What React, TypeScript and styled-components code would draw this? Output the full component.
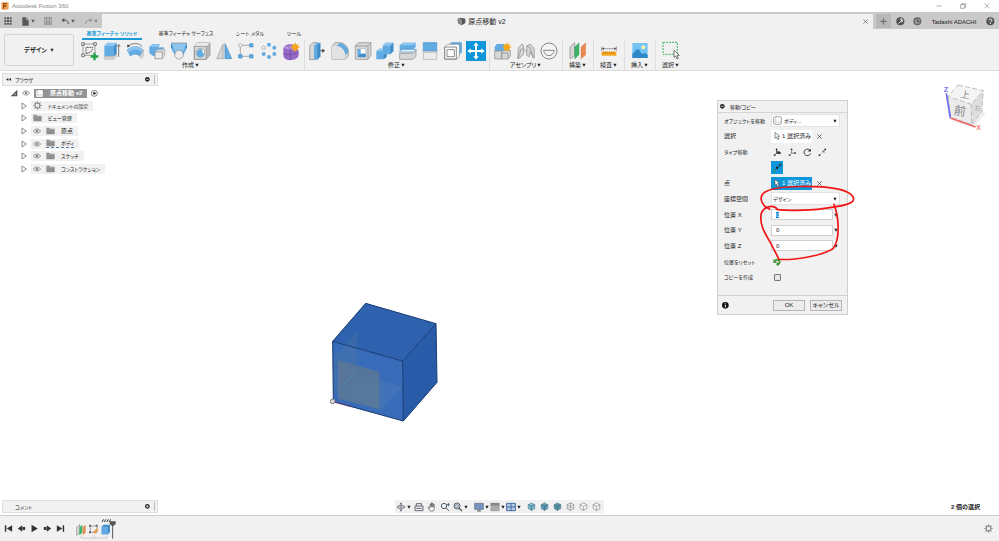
import React, { useEffect, useRef } from "react";
import styled, { createGlobalStyle, css } from "styled-components";

const GlobalStyle = createGlobalStyle`
  * { box-sizing: border-box; }
  html, body { margin: 0; padding: 0; }
  body, button, input, select {
    font-family: "Liberation Sans", "Noto Sans CJK JP", sans-serif;
    font-size: 6px;
    line-height: 8px;
    font-feature-settings: "palt";
    color: #222;
  }
  button, input, select { margin: 0; padding: 0; border: 0; background: none; border-radius: 0; }
  svg { display: block; flex: none; }
  ul { list-style: none; margin: 0; padding: 0; }
`;

/* ---------- layout ---------- */

const Page = styled.div`
  display: flex;
  flex-direction: column;
  min-height: 100vh;
  background: #fff;
  white-space: nowrap;
  overflow: hidden;
`;

const TitleBar = styled.header`
  display: flex;
  align-items: center;
  height: 12px;
  padding: 0 7px 0 1px;
  gap: 3px;
  color: #888;
`;

const WindowButtons = styled.div`
  display: flex;
  gap: 14px;
  margin-left: auto;
`;

const PlainButton = styled.button`
  display: flex;
  align-items: center;
  justify-content: center;
  gap: 1px;
`;

const TabStrip = styled.div`
  display: flex;
  height: 17px;
  padding-top: 2px;
  background: #c9c9c9;
`;

const QuickAccess = styled.nav`
  display: flex;
  align-items: center;
  gap: 9px;
  width: 102px;
  padding-left: 4px;
  border-bottom: 1px solid #f1f1f1;
`;

const DocumentTab = styled.div`
  flex: 1;
  display: flex;
  align-items: center;
  justify-content: center;
  gap: 2px;
  padding: 0 5px 0 0;
  background: #f1f1f1;
  font-size: 7px;
`;

const TabTitle = styled.span`
  display: flex;
  align-items: center;
  justify-content: center;
  gap: 2px;
  flex: 1;
`;

const NewTab = styled.button`
  display: flex;
  align-items: center;
  justify-content: center;
  width: 15px;
  height: 14px;
  margin-left: 3px;
  background: #b8b8b8;
`;

const Account = styled.div`
  display: flex;
  align-items: center;
  gap: 8px;
  width: 103px;
  margin-left: 5px;
  padding-right: 4px;
`;

const UserButton = styled(PlainButton)`
  margin: 0 auto;
`;

const Ribbon = styled.section`
  display: flex;
  height: 42px;
  background: #f1f1f1;
  border-bottom: 1px solid #dcdcdc;
`;

const WorkspaceButton = styled.button`
  width: 70px;
  height: 32px;
  margin: 5px 4px 0;
  display: flex;
  align-items: center;
  justify-content: center;
  gap: 3px;
  border: 1px solid #d4d4d4;
  border-radius: 2px;
  font-weight: bold;
`;

const RibbonMain = styled.div`
  flex: 1;
`;

const RibbonTabs = styled.div`
  display: flex;
  height: 11px;
  padding-left: 4px;
`;

const RibbonTab = styled.button<{ $active?: boolean; $width: number }>`
  width: ${(p) => p.$width}px;
  height: 11px;
  padding-bottom: 1px;
  border-bottom: 2px solid ${(p) => (p.$active ? "#1a9bd7" : "transparent")};
  color: ${(p) => (p.$active ? "#1a9bd7" : "#222")};
  font-size: 5px;
  font-weight: ${(p) => (p.$active ? "bold" : "normal")};
`;

const Groups = styled.div`
  display: flex;
`;

const Group = styled.div<{ $width: number; $last?: boolean }>`
  width: ${(p) => p.$width}px;
  height: 30px;
  padding: 0 2px 0 1px;
  border-right: 1px solid ${(p) => (p.$last ? "transparent" : "#dedede")};
`;

const GroupTools = styled.div`
  display: grid;
  grid-auto-flow: column;
  grid-auto-columns: 1fr;
  justify-items: center;
  height: 21px;
  align-items: center;
`;

const Tool = styled.button<{ $active?: boolean }>`
  display: flex;
  width: 20px;
  height: 20px;
  background: ${(p) => (p.$active ? "#0d96d9" : "none")};
`;

const GroupLabel = styled(PlainButton)`
  margin: 0 auto;
`;

const Canvas = styled.main`
  position: relative;
  flex: 1;
  display: flex;
  flex-direction: column;
  padding: 2px;
`;

const PanelBar = styled.div`
  display: flex;
  align-items: center;
  gap: 4px;
  width: 156px;
  height: 13px;
  padding: 0 1px 0 3px;
  background: #f1f1f1;
  border: 1px solid #dedede;
`;

const PanelText = styled.span`
  flex: 1;
  font-size: 5px;
`;

const CommentText = styled(PanelText)`
  padding-left: 9px;
`;

const Grip = styled.i`
  width: 2px;
  height: 9px;
  border-left: 1px solid #bbb;
`;

const Tree = styled.ul`
  display: grid;
  grid-auto-rows: 1fr;
  height: 88px;
  margin-top: 1px;
  padding-left: 18px;
`;

const TreeRow = styled.li`
  display: flex;
  align-items: center;
  gap: 3px;
`;

const RootRow = styled(TreeRow)`
  gap: 4px;
  margin-left: -10px;
`;

const NodeBox = styled.div`
  display: flex;
  align-items: center;
  gap: 5px;
  height: 10px;
  padding: 0 5px 0 2px;
  background: #f1f1f1;
`;

const NodeIcon = styled.span`
  display: flex;
  width: 8px;
  justify-content: center;
`;

const NodeName = styled.span<{ $dotted?: boolean; $dense?: boolean }>`
  display: flex;
  align-items: center;
  gap: 6px;
  height: 9px;
  font-size: ${(p) => (p.$dense ? 5 : 6)}px;
  ${(p) =>
    p.$dotted &&
    css`
      border-bottom: 1px dashed #5b78a8;
    `}
`;

const RootName = styled.span`
  display: flex;
  align-items: center;
  gap: 6px;
  height: 9px;
  padding: 0 5px 0 1px;
  background: #949494;
  color: #fff;
  font-weight: bold;
`;

const BottomRow = styled.div`
  display: grid;
  grid-template-columns: 1fr auto 1fr;
  align-items: center;
  margin-top: auto;
  padding-right: 17px;
`;

const ViewBar = styled.nav`
  display: flex;
  align-items: center;
  gap: 3px;
  height: 13px;
  padding: 0 3px 0 1px;
  margin-left: 17px;
  background: #f1f1f1;
`;

const ViewCluster = styled.div<{ $gap: number }>`
  display: flex;
  gap: ${(p) => p.$gap}px;
  margin-left: 3px;
`;

const Status = styled.output`
  justify-self: end;
  font-weight: bold;
`;

const Timeline = styled.footer`
  display: flex;
  align-items: center;
  height: 26px;
  padding: 0 6px 0 3px;
  background: #f1f1f1;
  border-top: 1px solid #ccc;
`;

const Playback = styled.div`
  display: flex;
  gap: 2px;
  margin-right: 9px;
`;

const TimelineEnd = styled.div`
  margin-left: auto;
`;

/* ---------- floating items on the canvas ---------- */

const BodyModel = styled.svg`
  position: absolute;
  left: 320px;
  top: 219px;
`;

const ViewCube = styled.svg`
  position: absolute;
  right: 0;
  top: 4px;
`;

const RedMark = styled.svg`
  position: absolute;
  right: 134px;
  top: 19px;
  pointer-events: none;
`;

const Dialog = styled.form`
  position: absolute;
  right: 151px;
  top: 29px;
  width: 131px;
  background: #f1f1f1;
  border: 1px solid #cfcfcf;
`;

const DialogHeader = styled.div`
  display: flex;
  align-items: center;
  gap: 5px;
  height: 12px;
  padding-left: 2px;
  border-bottom: 1px solid #d6d6d6;
  font-size: 5px;
`;

const Fields = styled.div`
  display: grid;
  grid-auto-rows: 1fr;
  height: 172px;
  margin: 0 7px 10px 6px;
`;

const Field = styled.div<{ $dense?: boolean }>`
  display: grid;
  grid-template-columns: 47px 1fr;
  align-items: center;
  font-size: ${(p) => (p.$dense ? 5 : 6)}px;
`;

const Control = styled.div<{ $gap?: number }>`
  display: flex;
  align-items: center;
  gap: ${(p) => p.$gap ?? 0}px;
`;

const SelectBox = styled.div`
  display: flex;
  align-items: center;
  flex: 1;
  gap: 2px;
  height: 13px;
  padding: 0 2px 0 1px;
  background: #fff;
  border: 1px solid #e2e2e2;
`;

const Select = styled.select`
  appearance: none;
  flex: 1;
  min-width: 0;
  outline: none;
  font-size: 5px;
`;

const PickButton = styled.button<{ $active?: boolean }>`
  display: flex;
  align-items: center;
  gap: 1px;
  width: 41px;
  height: 13px;
  padding-left: 2px;
  margin-right: 5px;
  background: ${(p) => (p.$active ? "#0d96d9" : "#fff")};
  color: ${(p) => (p.$active ? "#fff" : "#222")};
`;

const ModeButton = styled.button<{ $active?: boolean }>`
  display: flex;
  align-items: center;
  justify-content: center;
  width: 12px;
  height: 13px;
  background: ${(p) => (p.$active ? "#0d96d9" : "none")};
`;

const NumberInput = styled.input`
  width: 62px;
  height: 11px;
  padding: 0 4px;
  background: #fff;
  border: 1px solid #d0d0d0;
  outline: none;
  &::selection { background: #0078d7; color: #fff; }
`;

const CheckBox = styled.input`
  appearance: none;
  width: 7px;
  height: 7px;
  margin-left: 3px;
  border: 1px solid #777;
  border-radius: 1px;
  background: #e6e6e6;
`;

const ResetButton = styled.button`
  margin-left: 2px;
`;

const DialogFooter = styled.div`
  display: flex;
  align-items: center;
  gap: 5px;
  height: 19px;
  padding: 0 5px 0 4px;
  border-top: 1px solid #d0d0d0;
`;

const FooterButton = styled.button`
  width: 32px;
  height: 11px;
  border: 1px solid #b5b5b5;
  background: #ececec;
  line-height: 9px;
  &:first-of-type { margin-left: auto; }
`;

/* ---------- icons ---------- */

type IconProps = { children: React.ReactNode; size?: number; box?: number };
const Icon = ({ children, size = 20, box = 60 }: IconProps) => (
  <svg width={size} height={size} viewBox={`0 0 ${box} ${box}`} fill="none" aria-hidden="true">
    {children}
  </svg>
);

const Caret = ({ color = "#222" }: { color?: string }) => (
  <svg width="4" height="4" viewBox="0 0 12 12" aria-hidden="true">
    <path d="M1 2h10L6 11z" fill={color} />
  </svg>
);

const B = "#62ace3";
const BL = "#8cc6ef";
const BD = "#3f8cc8";
const G = "#d6d6d6";
const GL = "#ececec";
const GD = "#8a8a8a";

const createTools: [string, React.ReactNode][] = [
  ["スケッチを作成", <>
    <path d="M9 9h36v34H9z" stroke="#777" strokeWidth="2" />
    <path d="M5 5h8v8H5zM41 5h8v8h-8zM5 39h8v8H5z" fill="#f1f1f1" stroke="#444" strokeWidth="2" />
    <path d="M18 37V19h20c0 9-6 18-20 18z" stroke="#555" strokeWidth="3" strokeDasharray="5 2" />
    <path d="M40 35h7v8h8v7h-8v8h-7v-8h-8v-7h8z" fill="#21a249" />
  </>],
  ["押し出し", <>
    <path d="m7 14 8-9h29l-8 9z" fill={BL} /><path d="M7 14h29v33H7z" fill={B} />
    <path d="m36 14 8-9v33l-8 9z" fill={BD} /><path d="M7 46h29l8-9v9l-8 9H7z" fill={G} stroke={GD} />
    <path d="M50 48V12m-4 5 4-7 4 7" stroke="#444" strokeWidth="2" />
  </>],
  ["回転", <>
    <path d="M6 27c14-14 36-14 49 0L45 46c-9-8-20-8-29 0z" fill={B} stroke={BD} />
    <path d="M6 27c14-14 36-14 49 0l-5 7c-12-11-27-11-39 0z" fill={BL} />
    <path d="m44 46 11-19v18l-5 8z" fill={G} stroke={GD} /><path d="M8 17C20 5 42 4 52 17" stroke="#444" strokeWidth="2" />
    <path d="m6 19 2-9 7 6z" fill="#333" />
  </>],
  ["スイープ", <>
    <path d="M7 17 17 9h22l-5 10h16v15L40 44H16L7 36z" fill={B} />
    <path d="m7 17 10-8h22l-7 9z" fill={BL} /><path d="m24 33 8-8h22v18l-8 10H24z" fill={G} stroke={GD} />
    <path d="M24 33h22v20H24z" fill={GL} stroke={GD} strokeWidth="2" />
  </>],
  ["ロフト", <>
    <path d="M6 6h48v15L43 42H17L6 21z" fill={B} /><path d="M6 6h48v14H6z" fill={BD} />
    <path d="M6 6h48L42 30H18z" fill={BL} /><path d="M6 6h48" stroke={GD} strokeWidth="2" />
    <circle cx="30" cy="41" r="13" fill={GL} stroke={GD} strokeWidth="2" />
  </>],
  ["穴", <>
    <path d="M7 16 17 5h37v37L43 55H7z" fill="#b8b8b8" stroke={GD} strokeWidth="2" />
    <path d="M7 16 17 5h37L43 16z" fill={GL} /><path d="M7 16h36v39H7z" fill={G} stroke={GD} strokeWidth="2" />
    <circle cx="25" cy="35" r="13" fill="#fff" stroke={GD} strokeWidth="2" /><path d="M14 37a11 11 0 0 1 17-11 12 12 0 0 0 5 13 11 11 0 0 1-22-2z" fill={B} />
  </>],
  ["ミラー", <>
    <path d="M27 10v43H8z" fill={G} stroke="#999" strokeWidth="2" /><path d="M33 8v45h20z" fill={B} stroke={BD} strokeWidth="2" />
    <path d="M30 4v53" stroke="#aaa" />
  </>],
  ["矩形状パターン", <>
    <path d="M18 13h24M13 19v22M18 46h24" stroke={GD} strokeWidth="2" /><circle cx="13" cy="13" r="5" fill="#fff" stroke={GD} strokeWidth="2" />
    <path d="M41 8h10v10H41zM8 41h10v10H8zM41 41h10v10H41z" fill={B} stroke={BD} strokeWidth="2" />
  </>],
  ["円形状パターン", <>
    <circle cx="14" cy="20" r="5" fill="#fff" stroke={GD} strokeWidth="2" />
    <g fill={B}><circle cx="30" cy="11" r="6" /><circle cx="46" cy="20" r="6" /><circle cx="46" cy="39" r="6" /><circle cx="30" cy="48" r="6" /><circle cx="14" cy="39" r="6" /></g>
  </>],
  ["フォームを作成", <>
    <path d="M7 23c0-8 14-15 24-13l14 7 8 12v14c-2 14-28 18-38 12-5-3-8-8-8-13z" fill="#9468c4" />
    <path d="M9 20c8-8 22-8 32-1l-13 7C19 24 13 24 9 20z" fill="#b795de" />
    <path d="M28 26v31M8 38c7 4 30 4 44-3M18 13c6 4 11 8 10 13" stroke="#6d459e" strokeWidth="2" />
    <path d="m43 4 3 7 7-3-3 7 8 3-8 4 3 7-7-3-3 8-4-8-7 3 3-7-7-4 7-3-3-7 7 3z" fill="#f5a61d" />
  </>],
];

const modifyTools: [string, React.ReactNode][] = [
  ["プレス/プル", <>
    <path d="M8 14 17 5h14v42l-8 9H8z" fill={G} stroke={GD} strokeWidth="2" />
    <path d="m21 14 9-9h10v41l-9 10H21z" fill={B} /><path d="m31 14 9-9v41l-9 10z" fill={BD} /><path d="M38 29h13" stroke="#333" strokeWidth="2" /><path d="m46 23 8 6-8 6z" fill="#333" />
  </>],
  ["フィレット", <>
    <path d="M6 15 15 5h17c12 2 21 11 23 24v17L45 55H6z" fill={G} stroke={GD} strokeWidth="2" />
    <path d="M27 8c8-4 25 7 28 25l-9 8c-1-13-11-24-25-25z" fill={B} stroke={BD} />
    <path d="M6 16h15c14 1 24 12 24 26v13H6z" fill="#e2e2e2" />
  </>],
  ["シェル", <>
    <path d="M7 15 16 5h38v38L45 55H7z" fill={G} stroke={GD} strokeWidth="2" />
    <path d="M7 15h38v40M45 15l9-10" stroke={GD} strokeWidth="2" /><path d="M14 23h24v25H14z" fill="#fff" stroke={GD} />
    <path d="M14 24h9v14h14v10H14z" fill={B} /><path d="m14 48 9-10h15v10z" fill={BD} />
  </>],
  ["結合", <>
    <path d="m23 14 9-9h23v26l-9 9H35v7l-9 8H4V31l9-8h10z" fill={B} />
    <path d="m23 14 9-9h23l-9 9zM4 31l9-8h10v8z" fill={BL} /><path d="m46 14 9-9v26l-9 9zM26 40h9v7l-9 8z" fill={BD} />
  </>],
  ["面をオフセット", <>
    <path d="m5 13 10-8h38v13l-8 9H5z" fill={B} /><path d="m5 13 10-8h38l-8 8z" fill={BL} />
    <path d="m5 31 8-6h42l-8 8H5z" fill="#e8f4fc" stroke={BD} strokeWidth="2" />
    <path d="M5 37h40l9-9v18l-9 9H5z" fill={G} stroke={GD} strokeWidth="2" />
  </>],
  ["面を分割", <>
    <path d="M10 5h40v23H10z" fill={B} stroke={BD} strokeWidth="2" /><path d="M10 34h40v21H10z" fill={GL} stroke="#aaa" strokeWidth="2" />
    <path d="M6 30h48" stroke={BD} strokeWidth="2" />
  </>],
  ["オフセット", <>
    <path d="m15 15 11-10h29v29L44 44H15z" fill={B} stroke={BD} strokeWidth="2" />
    <path d="m5 18 8-8h36v36l-8 9H5z" fill="#fff" stroke={GD} strokeWidth="2" /><path d="M5 18h35v36H5zM12 26h22v21H12z" stroke={GD} strokeWidth="3" />
  </>],
];

const moveIcon = (
  <path d="m30 4 8 10h-5v13h13v-5l10 8-10 8v-5H33v13h5l-8 10-8-10h5V33H14v5L4 30l10-8v5h13V14h-5z" fill="#fff" />
);

const assemblyTools: [string, React.ReactNode][] = [
  ["新規コンポーネント", <>
    <path d="m5 17 7-8h22v22H5z" fill={B} /><path d="M5 30h21v24H5zM26 36l7-8h19v17l-7 9H26z" fill={G} stroke={GD} strokeWidth="2" />
    <path d="M26 36h19v18" stroke={GD} strokeWidth="2" /><path d="m42 4 3 7 7-3-3 7 7 3-7 4 3 7-7-3-3 7-4-7-7 3 3-7-7-4 7-3-3-7 7 3z" fill="#f5a61d" />
  </>],
  ["ジョイント", <>
    <path d="m7 20 12-11 4 6v24L9 53H5z" fill={G} stroke={GD} strokeWidth="2" /><path d="m54 20-12-11-10 6v28l8 4 3-15 9 19h3z" fill={G} stroke={GD} strokeWidth="2" />
    <path d="m7 52 7-26 9-4M33 15l9 5 10 30M23 27l11 4" stroke={GD} strokeWidth="2" />
  </>],
  ["位置合わせジョイント", <>
    <circle cx="30" cy="30" r="24" fill="#f4f4f4" stroke="#888" strokeWidth="3" /><path d="M14 28h32c-1 9-8 16-16 16s-15-7-16-16z" stroke="#888" strokeWidth="3" />
  </>],
];

const planesArt = (
  <>
    <path d="M6 18 20 5v39L6 54z" fill={G} stroke={GD} strokeWidth="2" /><path d="M20 18 33 5v36L20 54z" fill="#3cb465" stroke="#32935a" />
    <path d="M39 18 53 5v36L39 54z" fill="#e98a52" stroke="#d37743" />
  </>
);

const singles: [string, string, React.ReactNode][] = [
  ["構築", "オフセット平面", planesArt],
  ["検査", "計測", <>
    <path d="M8 16v14M52 16v14M8 23h44" stroke="#777" strokeWidth="2" /><path d="m8 23 7-4v8zM52 23l-7-4v8z" fill="#555" />
    <path d="M8 32h44v12H8z" fill="#f5a31a" /><path d="M13 32v5m6-5v5m6-5v5m6-5v5m6-5v5m6-5v5" stroke="#b87300" strokeWidth="2" />
  </>],
  ["挿入", "イメージを挿入", <>
    <path d="M7 6h46v45H7z" fill="#74c3f5" /><path d="M7 37c9-3 10-15 17-12 7 1 8 15 14 14 7-5 9-3 15 3v9H7z" fill="#3189c7" />
    <circle cx="40" cy="19" r="6" fill="#fff3b0" />
  </>],
  ["選択", "選択ツール", <>
    <path d="M6 4h43v36H6z" stroke="#3bb263" strokeWidth="3" strokeDasharray="6 3" />
    <path d="M39 28v21l5-4 4 9 4-2-4-9h7z" fill="#fff" stroke="#333" strokeWidth="2" />
  </>],
];

const Eye = () => (
  <svg width="8" height="6" viewBox="0 0 24 18" fill="none" aria-hidden="true">
    <path d="M1 9C7 1 17 1 23 9 17 17 7 17 1 9z" stroke="#999" strokeWidth="3" /><circle cx="12" cy="9" r="4" fill="#888" />
  </svg>
);
const Folder = () => (
  <svg width="9" height="8" viewBox="0 0 27 24" aria-hidden="true">
    <path d="M1 2h9l3 3h13v17H1z" fill="#8f8f8f" /><path d="M2 8h23" stroke="#ccc" />
  </svg>
);
const Gear = ({ size = 9 }: { size?: number }) => (
  <Icon size={size} box={30}>
    <circle cx="15" cy="15" r="8" stroke="#8d8d8d" strokeWidth="4" />
    <path d="M15 1v5M15 24v5M1 15h5M24 15h5M5 5l4 4M21 21l4 4M5 25l4-4M21 9l4-4" stroke="#8d8d8d" strokeWidth="4" />
  </Icon>
);
const Expander = () => (
  <Icon size={8} box={24}><path d="M6 3v18l13-9z" stroke="#555" strokeWidth="2" fill="#fff" /></Icon>
);
const BoxIcon = ({ size = 9 }: { size?: number }) => (
  <Icon size={size} box={27}>
    <rect x="2" y="2" width="23" height="23" rx="4" fill="#fff" stroke="#777" strokeWidth="2" /><path d="M8 3v15l-5 5M8 18h16" stroke="#bbb" strokeWidth="2" />
  </Icon>
);
const Dot = ({ minus }: { minus?: boolean }) => (
  <Icon size={5} box={15}>
    <circle cx="7" cy="7" r="7" fill="#222" /><path d={minus ? "M3 7h8" : "M3 7h8M7 3v8"} stroke="#fff" strokeWidth="2" />
  </Icon>
);
const Cross = ({ size = 5, color = "#333" }: { size?: number; color?: string }) => (
  <Icon size={size} box={15}><path d="M1 1l13 13M14 1 1 14" stroke={color} strokeWidth="2" /></Icon>
);
const Cursor = () => (
  <Icon size={8} box={24}><path d="M6 1v18l4-4 4 8 4-2-4-8h6z" fill="#fff" stroke="#555" strokeWidth="2" /></Icon>
);

const nodes: { name: string; kind: "gear" | "folder"; eye?: boolean; dotted?: boolean; dense?: boolean }[] = [
  { name: "ドキュメントの設定", kind: "gear", dense: true },
  { name: "ビュー管理", kind: "folder", dense: true },
  { name: "原点", kind: "folder", eye: true },
  { name: "ボディ", kind: "folder", eye: true, dotted: true, dense: true },
  { name: "スケッチ", kind: "folder", eye: true, dense: true },
  { name: "コンストラクション", kind: "folder", eye: true, dense: true },
];

const moveModes: [string, React.ReactNode][] = [
  ["自由移動", <><path d="M12 2v15h14M12 17 4 25" stroke="#333" strokeWidth="3" /><path d="m8 7 4-6 4 6zM21 13l7 4-7 4zM2 20l2 7 6-2zM14 11h8v8h-8z" fill="#333" /></>],
  ["移動", <><path d="M12 2v15h14M12 17 4 25" stroke="#444" strokeWidth="2" /><path d="m8 7 4-6 4 6zM21 13l7 4-7 4zM2 20l2 7 6-2z" fill="#333" /></>],
  ["回転", <><path d="M24 9a11 11 0 1 0 1 9" stroke="#333" strokeWidth="3" /><path d="M26 2v10H16z" fill="#333" /></>],
  ["点から点", <><path d="m6 23 18-18" stroke="#555" strokeWidth="2" strokeDasharray="5 3" /><circle cx="5" cy="24" r="3" fill="#333" /><circle cx="24" cy="5" r="3" fill="#333" /><path d="M14 10h6v6" stroke="#333" strokeWidth="2" /></>],
];

const viewTools: [string, boolean, React.ReactNode][] = [
  ["オービット", true, <><path d="M15 3v24M3 15h24" stroke="#667" strokeWidth="2" /><ellipse cx="15" cy="15" rx="12" ry="5" stroke="#667" strokeWidth="2" /><path d="m11 7 4-6 4 6zM11 23l4 6 4-6z" fill="#667" /></>],
  ["ビュー正面", false, <><path d="M3 12h24v14H3zM7 12V5h16v7M7 19h16" stroke="#667" strokeWidth="3" /></>],
  ["画面移動", false, <path d="M9 27 3 16l3-1 3 4V7h3v8V3h3v12V4h3v12l1-9h3v13l-3 7z" fill="#fff" stroke="#555" strokeWidth="2" />],
  ["ズーム", false, <><circle cx="12" cy="12" r="8" stroke="#567" strokeWidth="3" /><path d="m18 18 9 9M25 3v10M20 8h9" stroke="#567" strokeWidth="3" /></>],
  ["フィット", true, <><circle cx="12" cy="12" r="9" fill="#ddd" stroke="#567" strokeWidth="3" /><path d="m18 18 9 9" stroke="#555" strokeWidth="4" /><path d="M8 8h8v8H8z" stroke="#789" strokeWidth="2" /></>],
];
const displayTools: [string, React.ReactNode][] = [
  ["表示設定", <><path d="M2 4h26v18H2z" fill="#7795bf" stroke="#56657a" strokeWidth="2" /><path d="M9 27h12M15 22v5" stroke="#666" strokeWidth="3" /></>],
  ["グリッド", <><path d="M2 3h26v24H2z" fill="#aaa" stroke="#999" /><path d="M2 3h26v8H2z" fill="#888" /></>],
  ["ビューポート", <><path d="M2 4h26v22H2z" fill="#b6cdea" stroke="#426a9f" strokeWidth="3" /><path d="M15 4v22M2 15h26" stroke="#426a9f" strokeWidth="3" /></>],
];
const cubeTones = ["#7fb9d1", "#5f9db8", "#5b96ad", "", "", ""];

const playPaths: [string, string][] = [
  ["先頭へ", "M5 6h4v18H5zM25 6v18L10 15z"],
  ["前へ", "M5 15 17 6v18zM18 11h7v8h-7z"],
  ["再生", "M7 5v20l17-10z"],
  ["次へ", "M25 15 13 6v18zM5 11h7v8H5z"],
  ["末尾へ", "M21 6h4v18h-4zM5 6v18l15-9z"],
];

/* ---------- components ---------- */

const MoveDialog = () => {
  const xRef = useRef<HTMLInputElement>(null);
  useEffect(() => {
    xRef.current?.focus();
    xRef.current?.select();
  }, []);
  return (
    <Dialog aria-label="移動/コピー" onSubmit={(e) => e.preventDefault()}>
      <DialogHeader><Dot minus />移動/コピー</DialogHeader>
      <Fields>
        <Field $dense>
          <label htmlFor="object">オブジェクトを移動</label>
          <SelectBox><BoxIcon /><Select id="object"><option>ボディ...</option></Select><Caret /></SelectBox>
        </Field>
        <Field>
          <span>選択</span>
          <Control><PickButton type="button"><Cursor />1 選択済み</PickButton><PlainButton type="button" aria-label="選択をクリア"><Cross /></PlainButton></Control>
        </Field>
        <Field $dense>
          <span>タイプ移動</span>
          <Control $gap={3}>
            {moveModes.map(([label, art]) => (
              <ModeButton type="button" key={label} aria-label={label}><Icon size={9} box={30}>{art}</Icon></ModeButton>
            ))}
          </Control>
        </Field>
        <Field>
          <span />
          <ModeButton type="button" $active aria-label="点から位置" aria-pressed="true">
            <Icon size={9} box={30}><path d="M8 22 24 6" stroke="#222" strokeWidth="3" strokeDasharray="5 2" /><circle cx="24" cy="6" r="4" stroke="#222" strokeWidth="2" /><circle cx="14" cy="16" r="4" fill="#222" /><path d="M3 21v6h7" stroke="#2fa84f" strokeWidth="3" /></Icon>
          </ModeButton>
        </Field>
        <Field>
          <span>点</span>
          <Control><PickButton type="button" $active><Cursor />1 選択済み</PickButton><PlainButton type="button" aria-label="点をクリア"><Cross /></PlainButton></Control>
        </Field>
        <Field>
          <label htmlFor="space">座標空間</label>
          <SelectBox><Select id="space"><option>デザイン</option></Select><Caret /></SelectBox>
        </Field>
        {["X", "Y", "Z"].map((axis) => (
          <Field key={axis}>
            <label htmlFor={`pos${axis}`}>位置 {axis}</label>
            <Control $gap={1}><NumberInput id={`pos${axis}`} ref={axis === "X" ? xRef : undefined} defaultValue="0" /><Caret /></Control>
          </Field>
        ))}
        <Field $dense>
          <span>位置をリセット</span>
          <ResetButton type="button" aria-label="位置をリセット">
            <Icon size={8} box={24}><path d="M5 10c5-8 15-5 15 2 0 5-5 8-9 5" stroke="#4a9b3d" strokeWidth="6" /><path d="M1 3v12h12z" fill="#4a9b3d" /><path d="M13 11v12h4z" fill="#2f7528" /></Icon>
          </ResetButton>
        </Field>
        <Field $dense>
          <label htmlFor="copy">コピーを作成</label>
          <CheckBox id="copy" type="checkbox" />
        </Field>
      </Fields>
      <DialogFooter>
        <Icon size={7} box={21}><circle cx="10" cy="10" r="10" fill="#111" /><path d="M10 4v3M10 9v7" stroke="#fff" strokeWidth="3" /></Icon>
        <FooterButton type="submit">OK</FooterButton>
        <FooterButton type="button">キャンセル</FooterButton>
      </DialogFooter>
    </Dialog>
  );
};

const ToolGroup = ({ label, width, tools, children, last }: { label: string; width: number; tools: [string, React.ReactNode][]; children?: React.ReactNode; last?: boolean }) => (
  <Group $width={width} $last={last}>
    <GroupTools>
      {tools.map(([name, art]) => (
        <Tool key={name} aria-label={name}><Icon>{art}</Icon></Tool>
      ))}
      {children}
    </GroupTools>
    <GroupLabel>{label}<Caret /></GroupLabel>
  </Group>
);

export default function App() {
  return (
    <Page>
      <GlobalStyle />
      <TitleBar>
        <Icon size={8} box={24}><rect x="1" y="1" width="22" height="22" rx="3" fill="#f2a65b" /><path d="M8 20V5h10M8 12h8" stroke="#9c4a0b" strokeWidth="4" /></Icon>
        <span>Autodesk Fusion 360</span>
        <WindowButtons>
          <PlainButton aria-label="最小化"><Icon size={10} box={30}><path d="M7 15h16" stroke="#888" strokeWidth="2" /></Icon></PlainButton>
          <PlainButton aria-label="元のサイズ"><Icon size={10} box={30}><path d="M8 11h12v11H8zM11 11V8h12v11h-3" stroke="#888" strokeWidth="2" /></Icon></PlainButton>
          <PlainButton aria-label="閉じる"><Icon size={10} box={30}><path d="m7 7 15 15M22 7 7 22" stroke="#888" strokeWidth="2" /></Icon></PlainButton>
        </WindowButtons>
      </TitleBar>

      <TabStrip>
        <QuickAccess>
          <PlainButton aria-label="データパネル"><Icon size={8} box={24}><path d="M1 1h6v6H1zM9 1h6v6H9zM17 1h6v6h-6zM1 9h6v6H1zM9 9h6v6H9zM17 9h6v6h-6zM1 17h6v6H1zM9 17h6v6H9zM17 17h6v6h-6z" fill="#555" /></Icon></PlainButton>
          <PlainButton aria-label="ファイル"><Icon size={9} box={27}><path d="M4 1h12l7 8v17H4z" fill="#555" /><path d="M16 1v8h7" stroke="#ccc" strokeWidth="2" /></Icon><Caret color="#555" /></PlainButton>
          <PlainButton aria-label="保存"><Icon size={8} box={24}><path d="M2 2h20v20H2zM7 2v7h10V2M6 22v-8h12v8M6 18h12" stroke="#777" strokeWidth="2" /></Icon></PlainButton>
          <PlainButton aria-label="元に戻す"><Icon size={9} box={27}><path d="M6 9c9 0 16 2 16 12" stroke="#555" strokeWidth="3" /><path d="M1 10 10 3v13z" fill="#555" /></Icon><Caret color="#555" /></PlainButton>
          <PlainButton aria-label="やり直し"><Icon size={9} box={27}><path d="M21 9C12 9 5 11 5 21" stroke="#999" strokeWidth="3" /><path d="m26 10-9-7v13z" fill="#999" /></Icon><Caret color="#888" /></PlainButton>
        </QuickAccess>
        <DocumentTab>
          <TabTitle>
            <Icon size={9} box={27}><path d="m2 5 11-3 12 3v13l-11 7L3 19z" fill="#555" /><path d="M2 5h13v19L3 19z" fill="#888" /></Icon>
            原点移動 v2
          </TabTitle>
          <PlainButton aria-label="タブを閉じる"><Cross color="#555" /></PlainButton>
        </DocumentTab>
        <NewTab aria-label="新規タブ"><Icon size={7} box={21}><path d="M10 1v19M1 10h19" stroke="#666" strokeWidth="3" /></Icon></NewTab>
        <Account>
          <PlainButton aria-label="拡張機能"><Icon size={9} box={27}><circle cx="13" cy="13" r="12" fill="#505050" /><path d="m7 20 10-10M12 9c2-5 7-4 8-2l-4 1 1 4 4-1c0 3-4 5-7 2" stroke="#ddd" strokeWidth="3" /></Icon></PlainButton>
          <PlainButton aria-label="ジョブの状態"><Icon size={9} box={27}><circle cx="13" cy="13" r="10" fill="#999" stroke="#666" strokeWidth="4" /><path d="M13 7v7h6" stroke="#444" strokeWidth="3" /></Icon></PlainButton>
          <UserButton>Tadashi ADACHI</UserButton>
          <PlainButton aria-label="ヘルプ"><Icon size={9} box={27}><circle cx="13" cy="13" r="12" fill="#505050" /><path d="M9 10c0-6 9-5 9 0 0 3-5 3-5 6M13 18v3" stroke="#fff" strokeWidth="3" /></Icon></PlainButton>
        </Account>
      </TabStrip>

      <Ribbon>
        <WorkspaceButton>デザイン<Caret /></WorkspaceButton>
        <RibbonMain>
          <RibbonTabs>
            <RibbonTab $active $width={60}>基準フィーチャ ソリッド</RibbonTab>
            <RibbonTab $width={88}>基準フィーチャ サーフェス</RibbonTab>
            <RibbonTab $width={40}>シート メタル</RibbonTab>
            <RibbonTab $width={48}>ツール</RibbonTab>
          </RibbonTabs>
          <Groups>
            <ToolGroup label="作成" width={227} tools={createTools} />
            <ToolGroup label="修正" width={185} tools={modifyTools}>
              <Tool $active aria-label="移動/コピー"><Icon>{moveIcon}</Icon></Tool>
            </ToolGroup>
            <ToolGroup label="アセンブリ" width={73} tools={assemblyTools} />
            {singles.map(([label, name, art], i) => (
              <ToolGroup key={label} label={label} width={31} tools={[[name, art]]} last={i === 3} />
            ))}
          </Groups>
        </RibbonMain>
      </Ribbon>

      <Canvas>
        <PanelBar>
          <Icon size={5} box={15}><path d="M7 3v9L0 7zM15 3v9L8 7z" fill="#333" /></Icon>
          <PanelText>ブラウザ</PanelText>
          <PlainButton aria-label="ブラウザを折りたたむ"><Dot minus /></PlainButton>
          <Grip />
        </PanelBar>
        <Tree>
          <RootRow>
            <Icon size={8} box={24}><path d="M22 2v20H2z" fill="#555" /><path d="M18 12v6h-7z" fill="#aaa" /></Icon>
            <Eye />
            <RootName><BoxIcon />原点移動 v2</RootName>
            <Icon size={7} box={21}><circle cx="10" cy="10" r="9" fill="#fff" stroke="#444" strokeWidth="2" /><circle cx="10" cy="10" r="4" fill="#333" /></Icon>
          </RootRow>
          {nodes.map((n) => (
            <TreeRow key={n.name}>
              <Expander />
              <NodeBox>
                {n.eye && <NodeIcon><Eye /></NodeIcon>}
                <NodeName $dotted={n.dotted} $dense={n.dense}>{n.kind === "gear" ? <Gear /> : <Folder />}{n.name}</NodeName>
              </NodeBox>
            </TreeRow>
          ))}
        </Tree>

        <BodyModel width="130" height="140" viewBox="0 0 390 420" fill="none">
          <path d="M137 40 348 101 248 213 38 154z" fill="#2e62ae" />
          <path d="m38 154 210 59 2 180L40 335z" fill="#386bb8" />
          <path d="m248 213 100-112 3 176-101 116z" fill="#285ca8" />
          <path d="m38 210 72-86v116l-70 78z" fill="#5179a0" opacity=".35" />
          <path d="m54 316 66-62 128 36-64 70z" fill="#5a86b5" opacity=".3" />
          <path d="m54 210 124 36v112L54 326z" fill="#5c7893" opacity=".8" />
          <path d="m54 302 60-62" stroke="#4e8fae" strokeWidth="5" opacity=".4" />
          <path d="M137 40 348 101 248 213 38 154zM38 154l2 181 210 58-2-180M250 393l101-116-3-176" stroke="#163a72" strokeWidth="3" strokeLinejoin="round" />
          <path d="m42 336 50 14" stroke="#7d3a68" strokeWidth="2" />
          <circle cx="38" cy="334" r="7" fill="#ddd" stroke="#777" strokeWidth="3" />
        </BodyModel>

        <ViewCube width="69" height="60" viewBox="0 0 207 180" fill="none">
          <path d="m65 138 67 18 34-38-8-14-42 22z" fill="#ddd" opacity=".5" />
          <path d="M84 30 160 47 124 88 54 65z" fill="#f4f4f4" /><path d="m54 65 70 23 1 61-62-22z" fill="#ebebeb" /><path d="m124 88 36-41-5 63-30 39z" fill="#dedede" />
          <path d="M84 30 160 47 124 88 54 65zM54 65l9 62 62 22-1-61M125 149l30-39 5-63" stroke="#bdbdbd" strokeWidth="3" strokeDasharray="15 7" />
          <path d="m49 55 12 74" stroke="#6b6bf0" strokeWidth="5" /><path d="m61 129 76 27" stroke="#f06464" strokeWidth="4" />
          <text x="70" y="117" fontSize="36" fill="#888" transform="rotate(11 70 117)">前</text>
          <text x="90" y="67" fontSize="28" fill="#888" transform="rotate(10 90 67)">上</text>
          <text x="134" y="106" fontSize="17" fill="#aaa">右</text>
          <text x="41" y="50" fontSize="22" fontWeight="bold" fill="#7474f0">Z</text>
          <text x="139" y="166" fontSize="21" fontWeight="bold" fill="#f57d7d">X</text>
        </ViewCube>

        <MoveDialog />

        <RedMark width="160" height="180" viewBox="0 0 480 540" fill="none" stroke="#f01414" strokeWidth="5" strokeLinecap="round" strokeLinejoin="round">
          <path d="M194 358C163 343 160 314 186 303 221 286 340 286 392 296 434 303 455 322 442 335 427 348 386 351 338 358 295 361 254 364 218 359" />
          <path d="M218 359C205 341 173 350 168 374 164 408 181 431 199 463L222 508C263 511 350 499 385 475 406 446 402 381 387 343" />
        </RedMark>

        <BottomRow>
          <PanelBar>
            <CommentText>コメント</CommentText>
            <PlainButton aria-label="コメントを追加"><Dot /></PlainButton>
            <Grip />
          </PanelBar>
          <ViewBar>
            {viewTools.map(([label, menu, art]) => (
              <PlainButton key={label} aria-label={label}><Icon size={10} box={30}>{art}</Icon>{menu && <Caret />}</PlainButton>
            ))}
            <ViewCluster $gap={1}>
              {displayTools.map(([label, art]) => (
                <PlainButton key={label} aria-label={label}><Icon size={10} box={30}>{art}</Icon><Caret /></PlainButton>
              ))}
            </ViewCluster>
            <ViewCluster $gap={4}>
              {cubeTones.map((tone, i) => (
                <PlainButton key={i} aria-label={`表示スタイル ${i + 1}`}>
                  <Icon size={9} box={30}>
                    <path d="m15 3 11 6v13l-11 6-11-6V9z" fill={tone || "#f6f6f6"} stroke={tone ? "#4c7c91" : "#777"} strokeWidth="2" />
                    <path d={i === 3 ? "M4 9l11 6 11-6M15 3v25M4 22l11-7 11 7" : "M4 9l11 6 11-6M15 15v13"} stroke={tone ? "#35596a" : "#888"} strokeWidth="2" />
                  </Icon>
                </PlainButton>
              ))}
            </ViewCluster>
          </ViewBar>
          <Status>2 個の選択</Status>
        </BottomRow>
      </Canvas>

      <Timeline>
        <Playback>
          {playPaths.map(([label, d]) => (
            <PlainButton key={label} aria-label={label}><Icon size={11} box={30}><path d={d} fill="#333" /></Icon></PlainButton>
          ))}
        </Playback>
        <svg width="42" height="22" viewBox="0 0 126 66" fill="none" aria-hidden="true">
          <path d="M5 28 14 20v24l-9 8z" fill="#ddd" stroke="#888" strokeWidth="2" /><path d="m13 28 9-8v24l-9 8z" fill="#3cb465" /><path d="m23 28 9-8v24l-9 8z" fill="#e98a52" />
          <path d="M46 24h20v19H46z" stroke="#777" strokeWidth="2" /><path d="M42 20h6v6h-6zM62 20h6v6h-6zM42 40h6v6h-6z" fill="#666" /><path d="m54 42 12-11 4 4-10 12z" fill="#ec9b45" />
          <path d="m80 26 5-6h20v22l-6 7H80z" fill="#3f8cc8" /><path d="M80 26h19v23H80z" fill="#62ace3" />
          <path d="m81 12 5-8M88 12l5-8M95 12l5-8M102 12l5-8" stroke="#333" strokeWidth="3" />
          <path d="M104 10h18v8l-7 6h-4l-7-6z" fill="#555" /><path d="M113 22v40" stroke="#555" strokeWidth="3" />
          <path d="M18 53v7h77v-7M57 53v7" stroke="#bbb" strokeWidth="2" />
        </svg>
        <TimelineEnd><PlainButton aria-label="設定"><Gear /></PlainButton></TimelineEnd>
      </Timeline>
    </Page>
  );
}
